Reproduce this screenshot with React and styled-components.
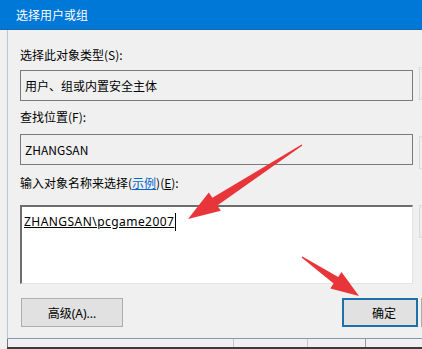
import React from 'react';
import styled, { createGlobalStyle } from 'styled-components';

const GlobalStyle = createGlobalStyle`
  html, body {
    margin: 0;
    padding: 0;
    background: #f0f0f0;
    overflow: hidden;
  }
  body {
    font-family: "Noto Sans", "Noto Sans CJK SC", sans-serif;
    font-size: 12px;
    color: #000;
  }
`;

const Screen = styled.div`
  position: relative;
  width: 422px;
  height: 349px;
  overflow: hidden;
  background: #f0f0f0;
`;

const TitleBar = styled.div`
  height: 29px;
  background: #0078d7;
  border-bottom: 1px solid #1565a8;
  color: #fff;
  display: flex;
  align-items: center;
  padding-left: 16px;
  font-family: "Noto Sans CJK SC", sans-serif;
  font-size: 12px;
`;

const DialogBody = styled.div`
  margin-left: 7px;
  width: 600px;
  border-left: 1px solid #b9c8d6;
  border-bottom: 1px solid #7f9bb6;
  padding: 17px 0 11px 12px;
  display: grid;
  grid-template-columns: 393px 78px;
  column-gap: 6px;
`;

const MainColumn = styled.div`
  display: flex;
  flex-direction: column;
`;

const SideColumn = styled.div`
  display: flex;
  flex-direction: column;
  gap: 36px;
  padding-top: 20px;
`;

const Label = styled.div`
  height: 16px;
  line-height: 16px;
  font-family: "Noto Sans CJK SC", sans-serif;
  margin-top: ${p => p.$top || 0}px;
  margin-bottom: ${p => p.$bottom || 0}px;
  white-space: nowrap;
`;

const Link = styled.span`
  color: #0066cc;
  text-decoration: underline;
`;

const Key = styled.span`
  text-decoration: underline;
`;

const ReadBox = styled.div`
  box-sizing: border-box;
  height: 31px;
  border: 1px solid #7a7a7a;
  background: #f0f0f0;
  display: flex;
  align-items: center;
  padding-left: 4px;
  font-family: "Noto Sans CJK SC", sans-serif;
  white-space: nowrap;
`;

const NameInput = styled.div`
  box-sizing: border-box;
  height: 79px;
  background: #fff;
  border-top: 2px solid #6d6d6d;
  border-left: 2px solid #6d6d6d;
  border-right: 1px solid #e3e3e3;
  border-bottom: 1px solid #e3e3e3;
  padding: 6px 0 0 2px;
  line-height: 17px;
`;

const ResolvedName = styled.span`
  text-decoration: underline;
  letter-spacing: 0.45px;
`;

const Caret = styled.span`
  display: inline-block;
  width: 1px;
  height: 18px;
  background: #000;
  vertical-align: top;
  margin-left: 1px;
`;

const SideButton = styled.div`
  box-sizing: border-box;
  height: 33px;
  border: 1px solid #dadada;
  background: #eeeeee;
`;

const ButtonRow = styled.div`
  grid-column: 1 / -1;
  display: flex;
  align-items: center;
  gap: 3px;
  margin-top: 14px;
`;

const Button = styled.div`
  box-sizing: border-box;
  width: ${p => p.$width}px;
  height: 29px;
  background: #e1e1e1;
  border: ${p => (p.$primary ? '2px solid #1f6fa8' : '1px solid #adadad')};
  display: flex;
  align-items: center;
  justify-content: center;
  padding-left: ${p => p.$nudge || 0}px;
  font-family: "Noto Sans", "Noto Sans CJK SC", sans-serif;
  margin-left: ${p => p.$offset || 0}px;
`;

const Spacer = styled.div`
  flex: 1;
`;

const BehindStrip = styled.div`
  height: 8px;
  margin-left: 7px;
  border-bottom: 2px solid #3b3b3b;
  display: flex;
  align-items: flex-start;
`;

const BehindCell = styled.div`
  width: ${p => p.$width}px;
  height: 8px;
  border-left: 1px solid ${p => p.$line || '#777'};
  color: #888;
  font-size: 10px;
  line-height: 8px;
  overflow: hidden;
  padding-left: 14px;
  font-family: "Noto Sans CJK SC", sans-serif;
`;

const Arrows = styled.svg`
  position: absolute;
  left: 0;
  top: 0;
  pointer-events: none;
`;

export default function App() {
  return (
    <Screen>
      <GlobalStyle />
      <TitleBar>选择用户或组</TitleBar>
      <DialogBody>
        <MainColumn>
          <Label $bottom={7}>选择此对象类型(S):</Label>
          <ReadBox>用户、组或内置安全主体</ReadBox>
          <Label $top={8} $bottom={9}>查找位置(F):</Label>
          <ReadBox>ZHANGSAN</ReadBox>
          <Label $top={10} $bottom={14}>
            输入对象名称来选择(<Link>示例</Link>)(<Key>E</Key>):
          </Label>
          <NameInput>
            <ResolvedName>ZHANGSAN\pcgame2007</ResolvedName>
            <Caret />
          </NameInput>
        </MainColumn>
        <SideColumn>
          <SideButton />
          <SideButton />
          <SideButton />
        </SideColumn>
        <ButtonRow>
          <Button $width={102} $offset={1}>高级(A)...</Button>
          <Spacer />
          <Button $width={76} $nudge={8} $primary>确定</Button>
          <Button $width={76} />
        </ButtonRow>
      </DialogBody>
      <BehindStrip>
        <BehindCell $width={250} />
        <BehindCell $width={70} $line="#c8c8c8" />
        <BehindCell $width={50} $line="#c8c8c8" />
        <BehindCell $width={50} $line="#999" />
      </BehindStrip>
      <Arrows width="422" height="349" viewBox="0 0 422 349">
        <polygon
          fill="#e8353a"
          points="302.4,145.6 217.3,205.4 220.8,210.8 188,219 208.8,192.4 212.4,197.8 301.6,144.4"
        />
        <polygon
          fill="#e8353a"
          points="301.6,257.6 333.6,283.5 330.3,288.5 359,296 341.5,271.9 338.2,276.9 302.4,256.4"
        />
      </Arrows>
    </Screen>
  );
}
